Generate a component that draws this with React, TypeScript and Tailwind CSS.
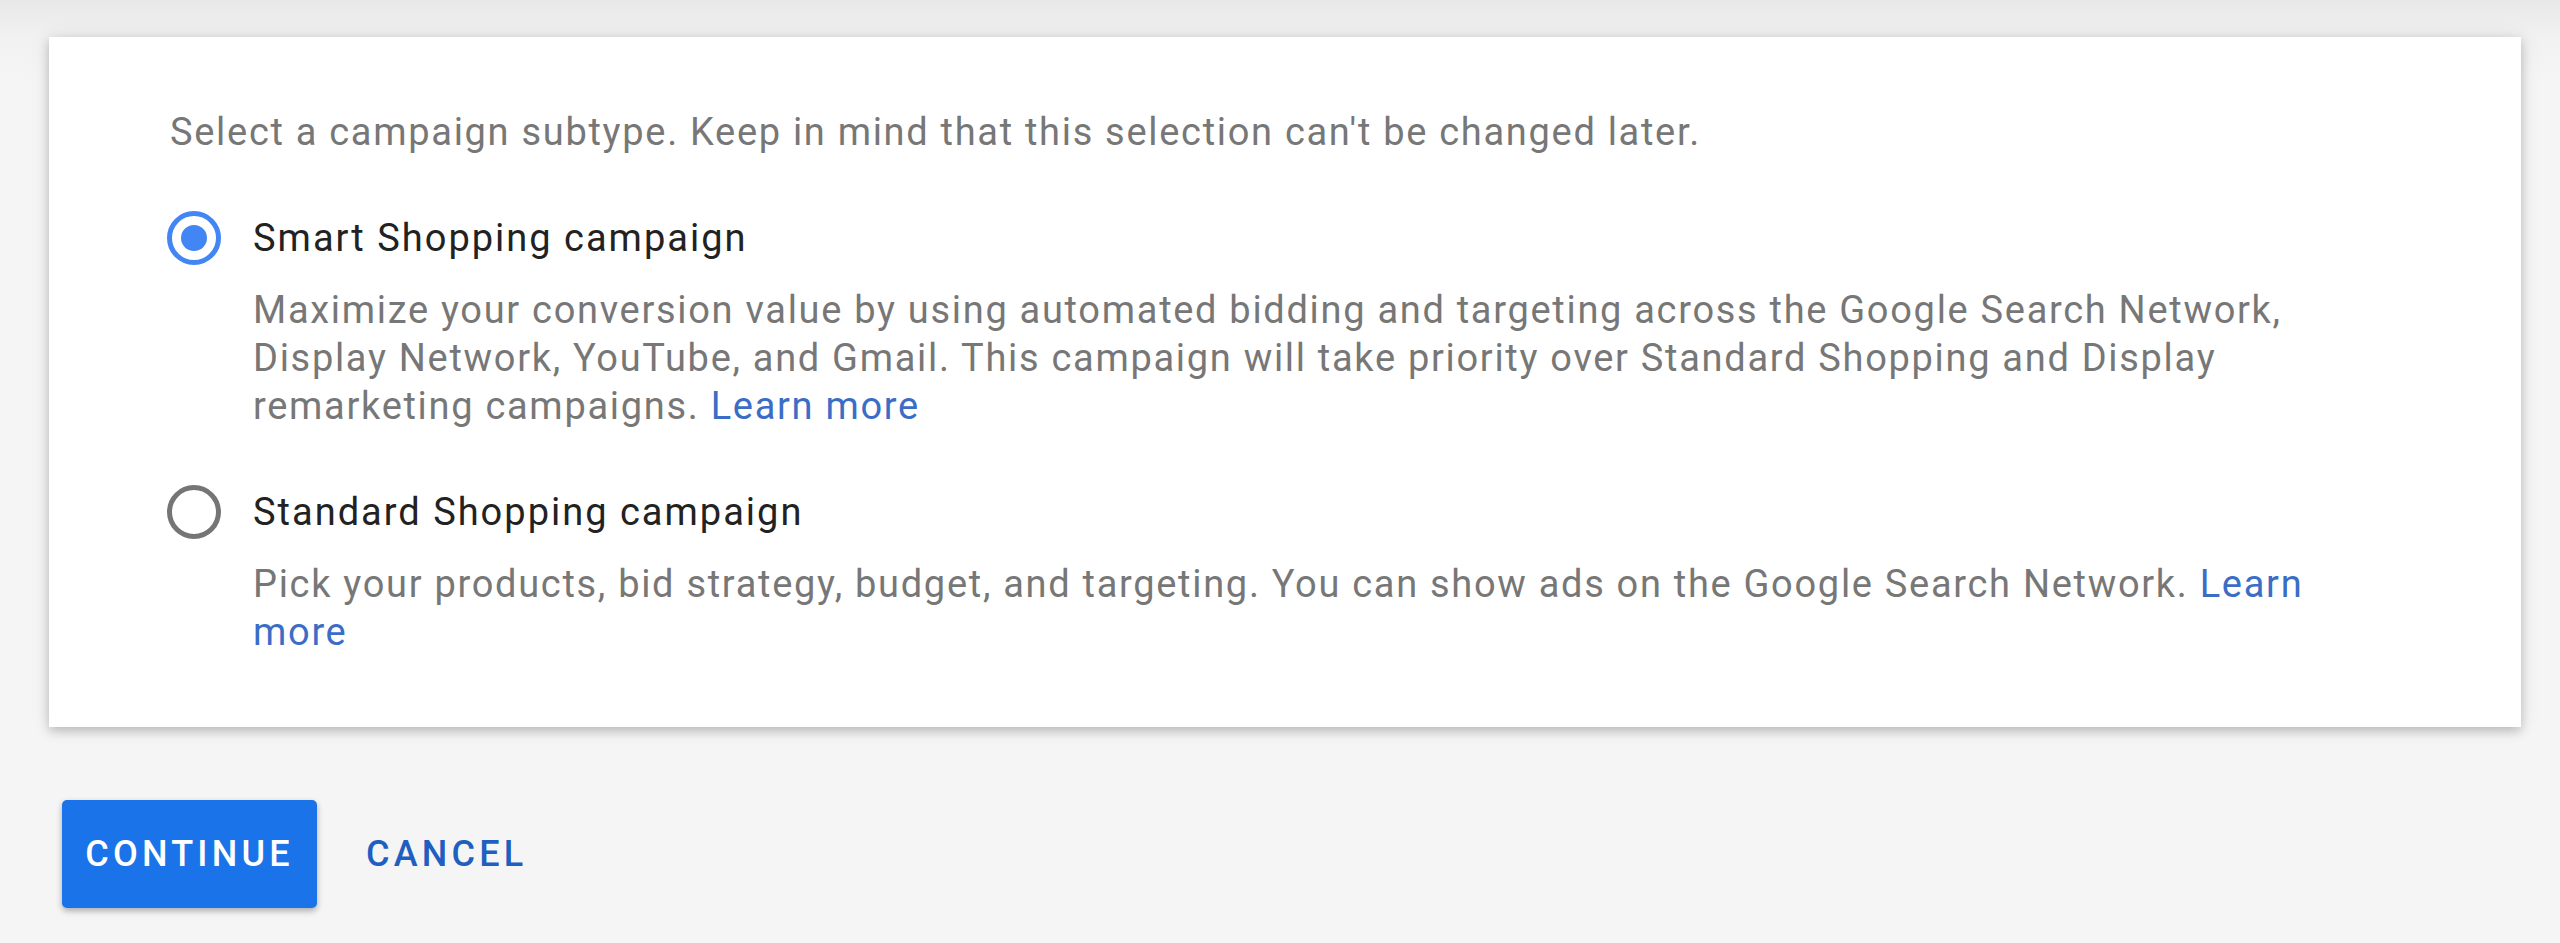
import type { ReactNode } from "react";

// Campaign subtype picker — two radio options in a card, actions below.
const options = [
  {
    id: "smart",
    title: "Smart Shopping campaign",
    body:
      "Maximize your conversion value by using automated bidding and targeting across the Google Search Network, Display Network, YouTube, and Gmail. This campaign will take priority over Standard Shopping and Display remarketing campaigns.",
  },
  {
    id: "standard",
    title: "Standard Shopping campaign",
    body:
      "Pick your products, bid strategy, budget, and targeting. You can show ads on the Google Search Network.",
  },
];

export default function App() {
  const selected = "smart";
  return (
    <div
      className="h-[943px] w-[2560px] overflow-hidden bg-[linear-gradient(to_bottom,#e8e8e8_0px,#f1f1f1_36px,#f5f5f5_80px)] pl-[49px] pr-[39px] pt-[37px]"
      style={{ fontFamily: "Roboto, 'Liberation Sans', sans-serif" }}
    >
      <div className="bg-white pl-[121px] pr-[121px] pt-[71px] pb-[71px] shadow-[0_4px_10px_rgba(0,0,0,0.22),0_0_22px_rgba(0,0,0,0.07)]">
        <p className="text-[38px] leading-[48px] tracking-[1.7px] text-[#777777]">
          Select a campaign subtype. Keep in mind that this selection can't be changed later.
        </p>
        <div className="mt-[58px] flex flex-col gap-[58px]">
          {options.map((o) => (
            <Option key={o.id} title={o.title} checked={o.id === selected}>
              {o.body} <a className="text-[#3b6dc7]">Learn more</a>
            </Option>
          ))}
        </div>
      </div>

      <div className="mt-[73px] flex items-center">
        <button className="ml-[13px] h-[108px] w-[255px] rounded-[5px] bg-[#1a73e8] text-[36px] font-medium tracking-[4.2px] text-white shadow-[0_3px_6px_rgba(0,0,0,0.3)]">
          CONTINUE
        </button>
        <button className="ml-[49px] text-[36px] font-medium tracking-[4.2px] text-[#1f5fc0]">
          CANCEL
        </button>
      </div>
    </div>
  );
}

function Option({
  title,
  checked,
  children,
}: {
  title: string;
  checked: boolean;
  children: ReactNode;
}) {
  return (
    <div className="flex">
      <div className="w-[83px] shrink-0">
        <div
          className={`-ml-[3px] mt-[-3px] flex h-[54px] w-[54px] items-center justify-center rounded-full border-[5px] ${
            checked ? "border-[#4285f4]" : "border-[#757575]"
          }`}
        >
          {checked && <div className="h-[26px] w-[26px] rounded-full bg-[#4285f4]" />}
        </div>
      </div>
      <div className="min-w-0 flex-1">
        <div className="text-[38px] leading-[48px] tracking-[2px] text-[#222222]">{title}</div>
        <div className="mt-[24px] text-[38px] leading-[48px] tracking-[1.7px] text-[#777777]">
          {children}
        </div>
      </div>
    </div>
  );
}
